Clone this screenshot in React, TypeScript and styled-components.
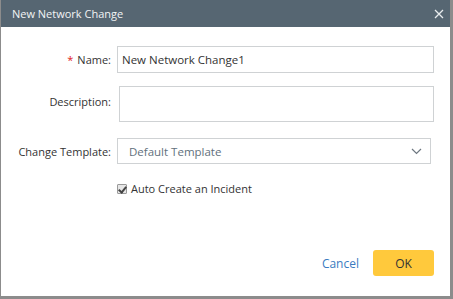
import React, { useState } from 'react';
import styled, { createGlobalStyle } from 'styled-components';

const GlobalStyle = createGlobalStyle`
  html, body {
    margin: 0;
    padding: 0;
    background: #8c8c8c;
    font-family: "Open Sans", "Noto Sans", sans-serif;
  }
`;

const Dialog = styled.div`
  width: 449px;
  height: 296px;
  margin-left: 1px;
  background: #ffffff;
  display: flex;
  flex-direction: column;
`;

const Header = styled.div`
  height: 27px;
  background: #566672;
  display: flex;
  align-items: center;
  justify-content: space-between;
  padding: 0 5px 0 11px;
  color: #f2f4f5;
  font-size: 11px;
`;

const CloseButton = styled.button`
  border: none;
  background: none;
  padding: 0;
  width: 12px;
  height: 12px;
  display: flex;
  cursor: pointer;
`;

const Form = styled.div`
  display: grid;
  grid-template-columns: 110px 1fr;
  column-gap: 6px;
  padding: 19px 16px 0 0;
  align-items: center;
`;

const Label = styled.label<{ $top?: boolean }>`
  text-align: right;
  font-size: 11px;
  color: #333;
  align-self: ${p => (p.$top ? 'start' : 'center')};
  padding-top: ${p => (p.$top ? '8px' : '0')};
`;

const Required = styled.span`
  color: #e02020;
  margin-right: 4px;
`;

const TextInput = styled.input`
  box-sizing: border-box;
  height: 27px;
  border: 1px solid #cfd2d4;
  padding: 0 4px;
  font-family: inherit;
  font-size: 11.5px;
  color: #333;
  outline: none;
`;

const TextArea = styled.textarea`
  box-sizing: border-box;
  height: 36px;
  margin: 13px 0 0 2px;
  border: 1px solid #cfd2d4;
  resize: none;
  font-family: inherit;
  outline: none;
`;

const Select = styled.div`
  box-sizing: border-box;
  height: 26px;
  margin: 16px 3px 0 0;
  border: 1px solid #cfd2d4;
  display: flex;
  align-items: center;
  justify-content: space-between;
  padding: 0 8px 0 11px;
  font-size: 11.5px;
  color: #62707c;
`;

const Spacer = styled.div``;

const CheckRow = styled.label`
  display: flex;
  align-items: center;
  gap: 4px;
  margin-top: 17px;
  font-size: 11px;
  color: #333;
`;

const CheckBox = styled.input`
  appearance: none;
  margin: 0;
  width: 10px;
  height: 10px;
  border: 1px solid #9a9a9a;
  border-radius: 1px;
  background: #e6e6e6;
  position: relative;
  &:checked::after {
    content: '';
    position: absolute;
    left: 2px;
    top: 0px;
    width: 3px;
    height: 6px;
    border: solid #444;
    border-width: 0 2px 2px 0;
    transform: rotate(40deg);
  }
`;

const Footer = styled.div`
  margin-top: auto;
  display: flex;
  justify-content: flex-end;
  align-items: center;
  gap: 14px;
  padding: 0 16px 20px 0;
`;

const LinkButton = styled.button`
  border: none;
  background: none;
  padding: 0;
  font-family: inherit;
  font-size: 12px;
  color: #3a7bbf;
  cursor: pointer;
`;

const PrimaryButton = styled.button`
  width: 61px;
  height: 26px;
  border: none;
  border-radius: 3px;
  background: #ffc93c;
  font-family: inherit;
  font-size: 12px;
  color: #333;
  cursor: pointer;
`;

const App: React.FC = () => {
  const [name, setName] = useState('New Network Change1');
  const [autoIncident, setAutoIncident] = useState(true);

  return (
    <>
      <GlobalStyle />
      <Dialog>
        <Header>
          <span>New Network Change</span>
          <CloseButton aria-label="Close">
            <svg width="12" height="12" viewBox="0 0 12 12">
              <path d="M2 2 L10 10 M10 2 L2 10" stroke="#e8ecee" strokeWidth="1.3" />
            </svg>
          </CloseButton>
        </Header>
        <Form>
          <Label>
            <Required>*</Required>Name:
          </Label>
          <TextInput value={name} onChange={e => setName(e.target.value)} />

          <Label $top style={{ marginTop: 13 }}>Description:</Label>
          <TextArea />

          <Label style={{ marginTop: 16 }}>Change Template:</Label>
          <Select>
            <span>Default Template</span>
            <svg width="11" height="7" viewBox="0 0 11 7">
              <path d="M1 1 L5.5 5.5 L10 1" stroke="#6d7780" strokeWidth="1.2" fill="none" />
            </svg>
          </Select>

          <Spacer />
          <CheckRow>
            <CheckBox
              type="checkbox"
              checked={autoIncident}
              onChange={e => setAutoIncident(e.target.checked)}
            />
            Auto Create an Incident
          </CheckRow>
        </Form>
        <Footer>
          <LinkButton>Cancel</LinkButton>
          <PrimaryButton>OK</PrimaryButton>
        </Footer>
      </Dialog>
    </>
  );
};

export default App;
